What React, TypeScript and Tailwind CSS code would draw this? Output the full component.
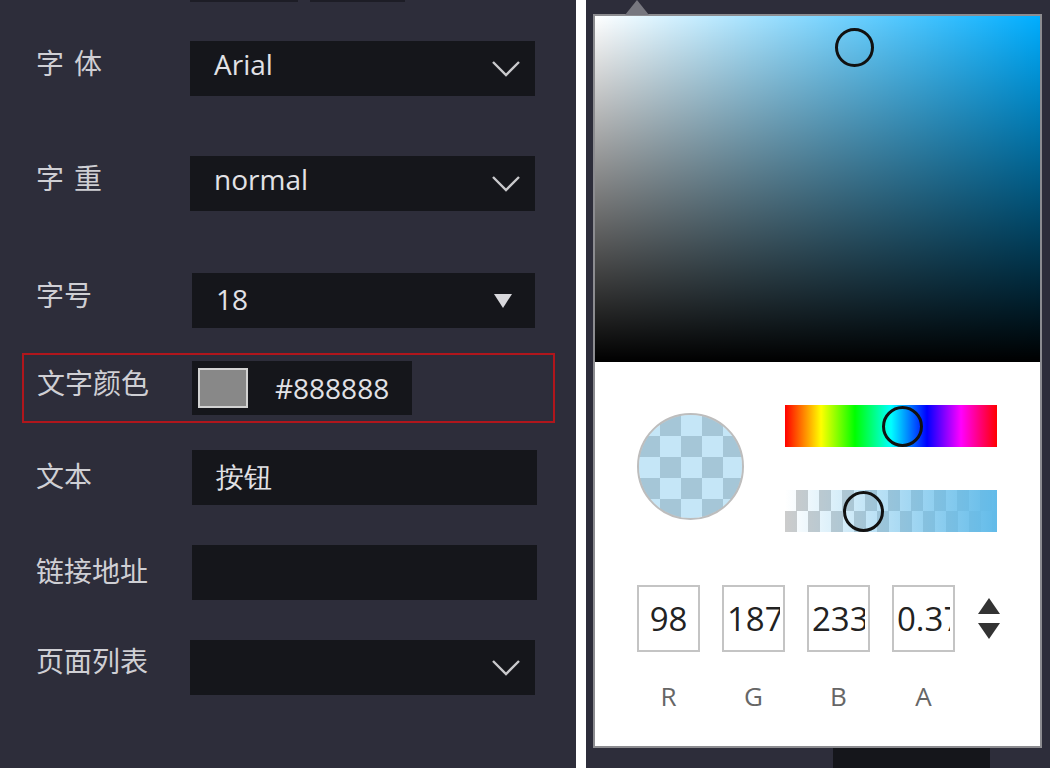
import React from 'react';

const Chevron = (): React.ReactElement => (
  <svg width="30" height="20" viewBox="0 0 30 20" fill="none" stroke="#c9c9cc" strokeWidth={2.4}>
    <path d="M2 3l13 13L28 3" />
  </svg>
);

const Caret = (): React.ReactElement => (
  <svg width="20" height="16" viewBox="0 0 20 16" fill="#d8d8dc">
    <path d="M1 1h18L10 15z" />
  </svg>
);

interface FieldProps {
  label: string;
  value?: string;
  icon?: React.ReactNode;
  spaced?: boolean;
  className?: string;
  boxClass?: string;
  labelClass?: string;
  valueClass?: string;
}

const Field: React.FC<FieldProps> = ({
  label,
  value,
  icon,
  spaced,
  className,
  boxClass,
  labelClass,
  valueClass,
}): React.ReactElement => (
  <div className={`flex items-center ${className ?? ''}`}>
    <div
      className={`w-[190px] pl-[36px] text-[28px] leading-none text-[#cfcfd4] ${spaced ? 'tracking-[10px]' : ''} ${labelClass ?? ''}`}
    >
      {label}
    </div>
    <div
      className={`flex h-[55px] items-center justify-between bg-[#15161b] pl-[24px] pr-[14px] text-[28px] text-[#e2e2e6] ${boxClass ?? 'w-[345px]'}`}
    >
      <span className={`font-['Open_Sans',sans-serif] ${valueClass ?? ''}`}>{value}</span>
      {icon}
    </div>
  </div>
);

const ChannelBox = ({ value }: { value: string }): React.ReactElement => (
  <input
    readOnly
    value={value}
    className="h-[67px] w-[63px] border-2 border-[#c4c4c4] bg-white px-[3px] text-center font-['Open_Sans',sans-serif] text-[33px] text-[#222] outline-none"
  />
);

export default function App(): React.ReactElement {
  return (
    <div className="flex h-[768px] w-[1050px] overflow-hidden bg-white font-['Noto_Sans_CJK_SC','Noto_Sans',sans-serif]">
      {/* property panel */}
      <div className="flex w-[576px] flex-col bg-[#2d2d3a]">
        <div className="flex gap-[12px] pl-[190px]">
          <div className="h-[2px] w-[108px] bg-[#1d1d26]" />
          <div className="h-[2px] w-[95px] bg-[#1d1d26]" />
        </div>
        <Field label="字体" value="Arial" spaced icon={<Chevron />} className="mt-[39px]" labelClass="-mt-[13px]" valueClass="-mt-[10px]" />
        <Field label="字重" value="normal" spaced icon={<Chevron />} className="mt-[60px]" labelClass="-mt-[13px]" valueClass="-mt-[10px]" />
        <Field label="字号" value="18" icon={<Caret />} className="mt-[62px]" boxClass="ml-[2px] w-[343px] pr-[22px]" labelClass="-mt-[14px]" valueClass="-mt-[3px]" />

        <div className="ml-[22px] mt-[25px] flex h-[70px] w-[533px] items-center border-2 border-[#b0161c]">
          <div className="w-[168px] pl-[13px] -mt-[12px] text-[28px] leading-none text-[#cfcfd4]">文字颜色</div>
          <div className="flex h-[54px] w-[220px] items-center bg-[#15161b] pl-[6px]">
            <div className="h-[40px] w-[50px] border-2 border-[#d2d2d2] bg-[#888888]" />
            <span className="ml-[27px] font-['Open_Sans',sans-serif] text-[28px] text-[#e2e2e6]">#888888</span>
          </div>
        </div>

        <Field label="文本" value="按钮" className="mt-[27px]" boxClass="ml-[2px] w-[345px]" labelClass="-mt-[6px]" valueClass="-mt-[4px]" />
        <Field label="链接地址" className="mt-[40px]" boxClass="ml-[2px] w-[345px]" labelClass="-mt-[5px]" />
        <Field label="页面列表" icon={<Chevron />} className="mt-[40px]" labelClass="-mt-[15px]" />
      </div>

      <div className="w-[10px]" />

      {/* color picker popover */}
      <div className="relative flex flex-1 flex-col bg-[#2d2d3a]">
        <div className="absolute left-[39px] top-0 h-0 w-0 border-x-[12px] border-b-[15px] border-x-transparent border-b-[#77777f]" />
        <div className="ml-[7px] mt-[14px] flex h-[737px] w-[449px] flex-col border-2 border-[#8c8c90] bg-white">
          <div className="relative h-[346px] w-full bg-[rgb(0,174,255)]">
            <div className="absolute inset-0 bg-[linear-gradient(to_right,#fff,rgba(255,255,255,0))]" />
            <div className="absolute inset-0 bg-[linear-gradient(to_top,#000,rgba(0,0,0,0))]" />
            <div className="absolute left-[240px] top-[12px] h-[39px] w-[39px] rounded-full border-[3px] border-[#111]" />
          </div>

          <div className="flex px-[42px] pt-[43px]">
            <div className="relative mt-[8px] h-[107px] w-[107px] overflow-hidden rounded-full border-2 border-[#bdbdbd] bg-[conic-gradient(#ccc_25%,#fff_0_50%,#ccc_0_75%,#fff_0)] bg-[length:42px_42px]">
              <div className="absolute inset-0 bg-[rgba(98,187,233,0.37)]" />
            </div>
            <div className="ml-[41px] flex w-[212px] flex-col gap-[43px]">
              <div className="relative h-[42px] bg-[linear-gradient(to_right,#f00,#ff0_17%,#0f0_33%,#0ff_50%,#00f_67%,#f0f_83%,#f00)]">
                <div className="absolute left-[97px] top-[1px] h-[41px] w-[41px] rounded-full border-[3px] border-[#111]" />
              </div>
              <div className="relative h-[42px] bg-[conic-gradient(#ccc_25%,#fff_0_50%,#ccc_0_75%,#fff_0)] bg-[length:23px_42px]">
                <div className="absolute inset-0 bg-[linear-gradient(to_right,rgba(98,187,233,0),rgb(98,187,233))]" />
                <div className="absolute left-[58px] top-[1px] h-[41px] w-[41px] rounded-full border-[3px] border-[#111]" />
              </div>
            </div>
          </div>

          <div className="mt-[53px] flex items-center gap-[22px] px-[42px]">
            <ChannelBox value="98" />
            <ChannelBox value="187" />
            <ChannelBox value="233" />
            <ChannelBox value="0.37" />
            <div className="ml-[1px] flex flex-col gap-[9px]">
              <svg width="22" height="16" viewBox="0 0 22 16" fill="#333">
                <path d="M11 0l11 16H0z" />
              </svg>
              <svg width="22" height="16" viewBox="0 0 22 16" fill="#333">
                <path d="M0 0h22L11 16z" />
              </svg>
            </div>
          </div>

          <div className="mt-[25px] flex gap-[22px] px-[42px] font-['Open_Sans',sans-serif] text-[26px] text-[#666]">
            <div className="w-[63px] text-center">R</div>
            <div className="w-[63px] text-center">G</div>
            <div className="w-[63px] text-center">B</div>
            <div className="w-[63px] text-center">A</div>
          </div>
        </div>
        <div className="ml-[247px] h-[20px] w-[157px] bg-[#15161b]" />
      </div>
    </div>
  );
}
